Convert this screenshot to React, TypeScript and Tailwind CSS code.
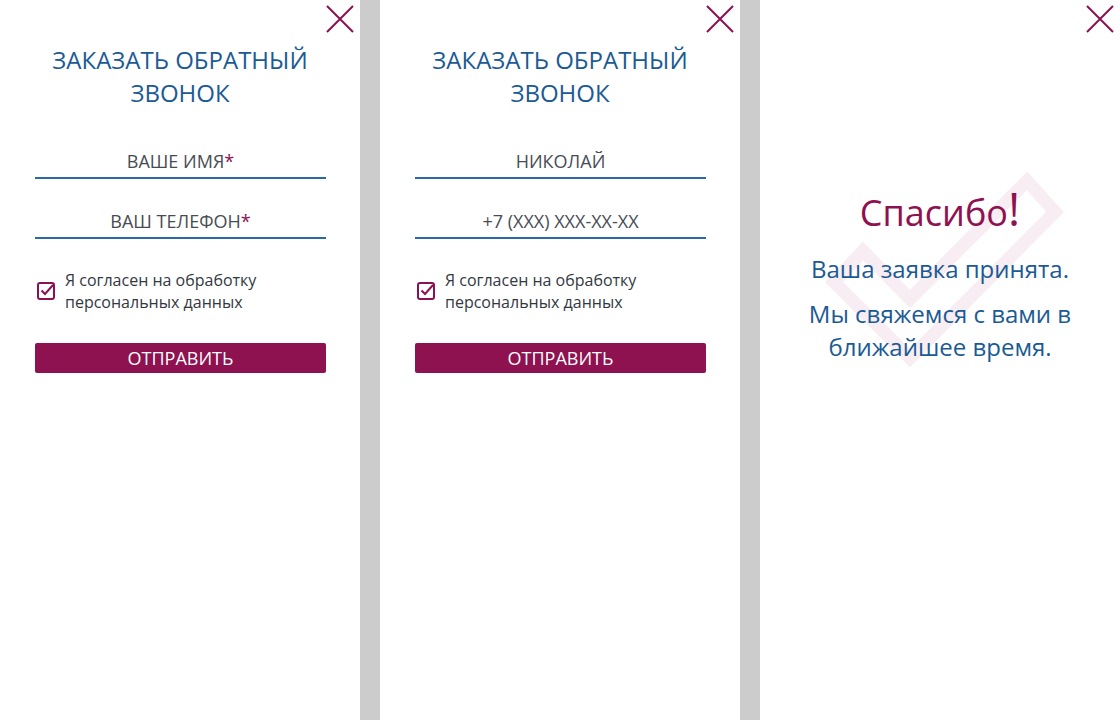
import React from "react";

const CloseIcon: React.FC = () => (
  <svg width="28" height="28" viewBox="0 0 28 28" className="block">
    <path d="M1 1 L27 27 M27 1 L1 27" stroke="#8c1150" strokeWidth="2" fill="none" />
  </svg>
);

const CheckBox: React.FC = () => (
  <svg width="20" height="20" viewBox="0 0 20 20" className="shrink-0">
    <rect x="2" y="2" width="16" height="16" rx="2" stroke="#8c1150" strokeWidth="2" fill="none" />
    <path d="M5.5 9.5 L9 13 L17 4" stroke="#8c1150" strokeWidth="2" fill="none" />
  </svg>
);

const Field: React.FC<{ text: string; required?: boolean }> = ({ text, required }) => (
  <div className="border-b-2 border-[#2a69a5] pb-[4px] text-center text-[18px] uppercase leading-[24px] text-[#474c54]">
    {text}
    {required && <span className="text-[#8c1150]">*</span>}
  </div>
);

const FormPanel: React.FC<{ name: string; phone: string; required?: boolean }> = ({
  name,
  phone,
  required,
}) => (
  <div className="flex w-[360px] shrink-0 flex-col bg-white">
    <div className="flex justify-end pr-[6px] pt-[5px]">
      <CloseIcon />
    </div>
    <h2 className="mt-[10px] text-center text-[24px] font-normal uppercase leading-[33px] text-[#1b5a94]">
      Заказать обратный
      <br />
      звонок
    </h2>
    <div className="mt-[40px] flex flex-col gap-[30px] pl-[35px] pr-[34px]">
      <Field text={name} required={required} />
      <Field text={phone} required={required} />
    </div>
    <div className="mt-[30px] flex items-center gap-[9px] pl-[36px] pr-[34px]">
      <CheckBox />
      <p className="text-[16px] leading-[22px] text-[#33383f]">
        Я согласен на обработку
        <br />
        персональных данных
      </p>
    </div>
    <div className="mt-[30px] pl-[35px] pr-[34px]">
      <button className="h-[30px] w-full rounded-[2px] bg-[#8e1150] text-[18px] uppercase leading-[30px] text-white">
        Отправить
      </button>
    </div>
  </div>
);

const ThanksPanel: React.FC = () => (
  <div className="relative flex w-[360px] shrink-0 flex-col bg-white">
    <div className="flex justify-end pr-[6px] pt-[5px]">
      <CloseIcon />
    </div>
    <svg
      width="360"
      height="720"
      viewBox="0 0 360 720"
      className="pointer-events-none absolute left-0 top-0"
    >
      <polygon
        points="74,282 150,358 295,212 267,181 150,299 103,251"
        fill="none"
        stroke="#f7edf2"
        strokeWidth="13"
        strokeLinejoin="miter"
      />
    </svg>
    <div className="relative mt-[151px] flex flex-col items-center text-center">
      <div className="text-[36px] leading-[48px] text-[#8e1150]">
        Спасибо<span className="text-[46px]">!</span>
      </div>
      <p className="mt-[15px] text-[24px] leading-[33px] text-[#1b5a94]">Ваша заявка принята.</p>
      <p className="mt-[12px] text-[24px] leading-[33px] text-[#1b5a94]">
        Мы свяжемся с вами в
        <br />
        ближайшее время.
      </p>
    </div>
  </div>
);

const App: React.FC = () => {
  return (
    <div
      className="flex h-[720px] w-[1120px] gap-[20px] overflow-hidden bg-[#cccccc]"
      style={{ fontFamily: '"Open Sans", "Noto Sans", sans-serif' }}
    >
      <FormPanel name="Ваше имя" phone="Ваш телефон" required />
      <FormPanel name="Николай" phone="+7 (XXX) XXX-XX-XX" />
      <ThanksPanel />
    </div>
  );
};

export default App;
